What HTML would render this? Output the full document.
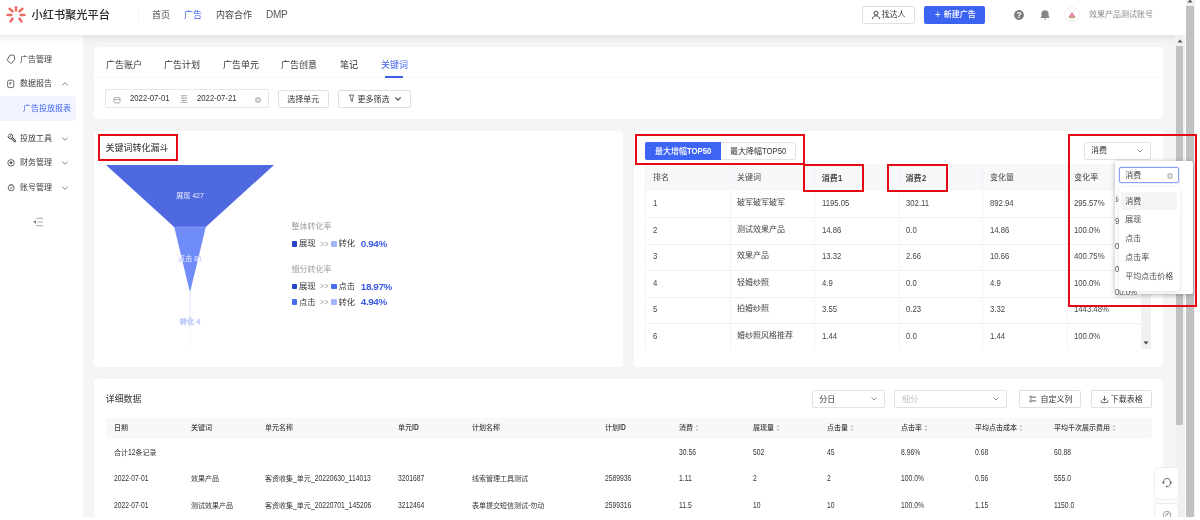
<!DOCTYPE html>
<html lang="zh-CN">
<head>
<meta charset="utf-8">
<title>小红书聚光平台</title>
<style>
*{box-sizing:border-box;margin:0;padding:0}
html,body{width:1200px;height:520px;overflow:hidden;background:#f5f5f5}
body{position:relative;font-family:"Liberation Sans","Noto Sans CJK SC",sans-serif;font-size:8px;color:#333;-webkit-font-smoothing:antialiased}
.abs{position:absolute}
.t{position:absolute;white-space:nowrap;line-height:1}
#header{left:0;top:0;width:1186px;height:35px;background:#fff;}
#side{left:0;top:35px;width:83px;height:485px;background:#fff}
.card{position:absolute;background:#fff;border-radius:4px}
.btn{position:absolute;border:1px solid #e0e0e0;border-radius:2px;background:#fff}
.blue{color:#4264ec}
.hl{position:absolute;height:1px;background:#efefef}
.n{display:inline-block;font-size:1.18em;line-height:0;transform:scaleX(.82);transform-origin:0 50%}
.s{font-size:1.1em}
</style>
</head>
<body>
<div id="root" style="position:absolute;left:0;top:0;width:1200px;height:520px;overflow:hidden;will-change:transform">
<!-- HEADER -->
<div id="header" class="abs"></div>
<svg class="abs" style="left:0;top:0" width="32" height="32" viewBox="0 0 32 32">
 <g stroke="#ef6f68" stroke-width="2.500" stroke-linecap="round">
  <line x1="16" y1="7.200" x2="16" y2="10.400"/>
  <line x1="9.500" y1="8.800" x2="12.500" y2="11.300"/>
  <line x1="22.500" y1="8.800" x2="19.500" y2="11.300"/>
  <line x1="7.500" y1="15" x2="11.400" y2="15"/>
  <line x1="24.500" y1="15" x2="20.600" y2="15"/>
  <line x1="10.500" y1="21.500" x2="12.500" y2="18.500"/>
  <line x1="21.500" y1="21.500" x2="19.500" y2="18.500"/>
 </g>
</svg>
<div class="t" style="left:31.500px;top:9.500px;font-size:11.200px;color:#2a2a2a;font-weight:500">小红书聚光平台</div>
<div class="abs" style="left:138px;top:9px;width:1px;height:12px;background:#f4f4f4"></div>
<div class="t" style="left:152px;top:11px;font-size:9px;color:#444">首页</div>
<div class="t blue" style="left:184px;top:11px;font-size:9px">广告</div>
<div class="t" style="left:216px;top:11px;font-size:9px;color:#444">内容合作</div>
<div class="t w" style="left:266px;top:10.300px;font-size:10px;color:#555;letter-spacing:-.3px">DMP</div>

<div class="btn" style="left:862px;top:6px;width:53px;height:18px"></div>
<svg class="abs" style="left:871px;top:10px" width="10" height="10" viewBox="0 0 10 10"><circle cx="5" cy="3.2" r="2" fill="none" stroke="#444" stroke-width="1"/><path d="M1.4 9c.3-2.2 1.8-3.2 3.6-3.2S8.300 6.800 8.600 9" fill="none" stroke="#444" stroke-width="1"/></svg>
<div class="t" style="left:881.500px;top:11px;font-size:8px;color:#333">找达人</div>
<div class="abs" style="left:924px;top:6px;width:61px;height:18px;background:#3d63f2;border-radius:2px"></div>
<div class="t" style="left:934.500px;top:9.300px;font-size:10px;color:#fff"><span class="s">&#8203;</span><span class="n" style="margin-right:-1.24px">+</span></div>
<div class="t" style="left:943.800px;top:11px;font-size:8px;color:#fff;font-weight:500">新建广告</div>
<svg class="abs" style="left:1012.700px;top:8.700px" width="12" height="12" viewBox="0 0 12 12"><circle cx="6" cy="6" r="4.900" fill="#7c7c7c"/><text x="6" y="9.100" font-size="8.500" font-weight="700" text-anchor="middle" fill="#fff" font-family="Liberation Sans, sans-serif">?</text></svg>
<svg class="abs" style="left:1039.200px;top:9px" width="12" height="12" viewBox="0 0 12 12"><path d="M6 1.300c-2.300 0-3.600 1.500-3.600 3.500v2.500L1.300 8.900h9.400L9.600 7.300V4.800C9.600 2.800 8.300 1.300 6 1.300z" fill="#858585"/><rect x="4.900" y="9.500" width="2.200" height="1.100" rx=".55" fill="#858585"/></svg>
<div class="abs" style="left:1064.200px;top:7.100px;width:15.400px;height:15.400px;border-radius:50%;border:1px solid #f9edf0;background:#fff"></div>
<svg class="abs" style="left:1067.800px;top:11px" width="8" height="8" viewBox="0 0 8 8"><path d="M4 .7L7.500 6.100Q4 7.900.5 6.100z" fill="#ec8a97"/><path d="M.7 6.200Q4 8 7.300 6.200" fill="none" stroke="#8fae7c" stroke-width=".8"/></svg>
<div class="t" style="left:1089px;top:11px;font-size:8px;color:#888">效果产品测试账号</div>

<!-- SIDEBAR -->
<div id="side" class="abs"></div>
<div class="abs" style="left:0;top:35px;width:1175px;height:9px;background:linear-gradient(to bottom,rgba(0,0,0,.07),rgba(0,0,0,.035) 35%,rgba(0,0,0,0))"></div>
<div class="abs" style="left:0;top:96px;width:76px;height:24.500px;background:#f2f5ff;border-radius:0 4px 4px 0"></div>
<svg class="abs" style="left:6px;top:54px" width="10" height="10" viewBox="0 0 10 10"><path d="M4.300 1.300h3a1.400 1.400 0 0 1 1.400 1.400v3L5.200 9.100a.8.800 0 0 1-1.100 0L1.200 6.200a.8.800 0 0 1 0-1.100z" fill="none" stroke="#555" stroke-width=".85" stroke-linejoin="round" transform="rotate(-8 5 5)"/></svg>
<div class="t" style="left:20px;top:55.600px;font-size:8px;color:#3c3c3c">广告管理</div>
<svg class="abs" style="left:6px;top:78.500px" width="10" height="10" viewBox="0 0 10 10"><rect x="1.600" y="1.200" width="6.200" height="7.400" rx="1.600" fill="none" stroke="#555" stroke-width=".85"/><path d="M3.800 5.800V3.500h1.900M3.800 4.600h1.400" stroke="#555" stroke-width=".7" fill="none"/></svg>
<div class="t" style="left:20px;top:80.300px;font-size:8px;color:#3c3c3c">数据报告</div>
<svg class="abs" style="left:61px;top:80.500px" width="8" height="6" viewBox="0 0 8 6"><path d="M1.300 4.400L4 1.700l2.700 2.700" fill="none" stroke="#777" stroke-width=".9"/></svg>
<div class="t blue" style="left:23px;top:105.300px;font-size:8px">广告投放报表</div>
<svg class="abs" style="left:6.500px;top:133px" width="10" height="10" viewBox="0 0 10 10"><path d="M4.600 4.800L8 8.200" stroke="#444" stroke-width="2.500" stroke-linecap="round"/><path d="M4.600 4.800L8 8.200" stroke="#fff" stroke-width=".9" stroke-linecap="round"/><circle cx="3.400" cy="3.400" r="2.300" fill="#fff" stroke="#444" stroke-width=".95"/><path d="M1.600 1.700L3.300 3.400" stroke="#fff" stroke-width="1.300"/><path d="M3.600 2.200v1.500H2.200" fill="none" stroke="#444" stroke-width=".7"/></svg>
<div class="t" style="left:20px;top:134.700px;font-size:8px;color:#3c3c3c">投放工具</div>
<svg class="abs" style="left:61px;top:135.500px" width="8" height="6" viewBox="0 0 8 6"><path d="M1.300 1.600L4 4.300l2.700-2.700" fill="none" stroke="#777" stroke-width=".9"/></svg>
<svg class="abs" style="left:6px;top:158px" width="10" height="10" viewBox="0 0 10 10"><circle cx="5" cy="4.800" r="3.200" fill="none" stroke="#444" stroke-width=".85"/><circle cx="5" cy="4.800" r="1.300" fill="#444"/></svg>
<div class="t" style="left:20px;top:159px;font-size:8px;color:#3c3c3c">财务管理</div>
<svg class="abs" style="left:61px;top:160px" width="8" height="6" viewBox="0 0 8 6"><path d="M1.300 1.600L4 4.300l2.700-2.700" fill="none" stroke="#777" stroke-width=".9"/></svg>
<svg class="abs" style="left:6px;top:183px" width="10" height="10" viewBox="0 0 10 10"><circle cx="5.200" cy="4.900" r="3" fill="none" stroke="#555" stroke-width=".85"/><path d="M3.800 5l1.100 1 1.800-2.300" fill="none" stroke="#555" stroke-width=".8"/><path d="M3.500 1.600l3.400 0" stroke="#555" stroke-width=".6"/></svg>
<div class="t" style="left:20px;top:183.700px;font-size:8px;color:#3c3c3c">账号管理</div>
<svg class="abs" style="left:61px;top:185px" width="8" height="6" viewBox="0 0 8 6"><path d="M1.300 1.600L4 4.300l2.700-2.700" fill="none" stroke="#777" stroke-width=".9"/></svg>
<svg class="abs" style="left:32px;top:216px" width="12" height="12" viewBox="0 0 12 12"><path d="M4.200 2.300h6.800M5.500 6h5.500M4.200 9.700h6.800" fill="none" stroke="#999" stroke-width=".85"/><path d="M4 4.200v3.600L1.200 6z" fill="#777"/></svg>

<!-- TOP CARD (tabs + filters) -->
<div class="card" style="left:94px;top:46.500px;width:1069px;height:72px"></div>
<div class="hl" style="left:94px;top:77px;width:1069px;background:#f8f8f8"></div>
<div class="t" style="left:106px;top:60.5px;font-size:9px;color:#333">广告账户</div>
<div class="t" style="left:164px;top:60.5px;font-size:9px;color:#333">广告计划</div>
<div class="t" style="left:223px;top:60.5px;font-size:9px;color:#333">广告单元</div>
<div class="t" style="left:281px;top:60.5px;font-size:9px;color:#333">广告创意</div>
<div class="t" style="left:340px;top:60.5px;font-size:9px;color:#333">笔记</div>
<div class="t blue" style="left:381px;top:60.5px;font-size:9px">关键词</div>
<div class="abs" style="left:385px;top:76px;width:18px;height:2px;background:#3d5fe6"></div>

<div class="btn" style="left:105.400px;top:89.400px;width:163.900px;height:18.500px;border-color:#e6e6e6"></div>
<svg class="abs" style="left:113px;top:95.8px" width="8" height="8" viewBox="0 0 8 8"><rect x="1" y="1.500" width="6" height="5.500" rx="1" fill="none" stroke="#999" stroke-width=".8"/><path d="M1 3.500h6" stroke="#999" stroke-width=".8"/></svg>
<div class="t" style="left:130px;top:94.100px;font-size:8px;color:#333"><span class="s">&#8203;</span><span class="n" style="margin-right:-8.69px">2022-07-01</span></div>
<div class="t" style="left:180px;top:96.300px;font-size:8px;color:#888">至</div>
<div class="t" style="left:197px;top:94.100px;font-size:8px;color:#333"><span class="s">&#8203;</span><span class="n" style="margin-right:-8.69px">2022-07-21</span></div>
<svg class="abs" style="left:254px;top:95.8px" width="8" height="8" viewBox="0 0 8 8"><circle cx="4" cy="4" r="3" fill="#c4c4c4"/><path d="M2.900 2.900l2.200 2.200M5.100 2.900L2.900 5.100" stroke="#fff" stroke-width=".7"/></svg>
<div class="btn" style="left:278.300px;top:89.600px;width:50.400px;height:18.300px"></div>
<div class="t" style="left:287.200px;top:96.100px;font-size:8px;color:#333">选择单元</div>
<div class="btn" style="left:338.200px;top:89.600px;width:72.600px;height:18.300px"></div>
<svg class="abs" style="left:347.500px;top:94.400px" width="8" height="9" viewBox="0 0 8 9"><path d="M1.400 1.100h4.600L4.400 4.300v3.200L3 6.600V4.300z" fill="none" stroke="#444" stroke-width=".8" stroke-linejoin="round"/></svg>
<div class="t" style="left:357.400px;top:96.100px;font-size:8px;color:#333">更多筛选</div>
<svg class="abs" style="left:393.800px;top:96.400px" width="8" height="6" viewBox="0 0 8 6"><path d="M1.300 1.400L4 4.100l2.700-2.700" fill="none" stroke="#444" stroke-width="1.100"/></svg>

<!-- FUNNEL CARD -->
<div class="card" style="left:94px;top:130.500px;width:529px;height:236px"></div>
<div class="t" style="left:105.500px;top:143.800px;font-size:9px;color:#2a2a2a">关键词转化漏斗</div>
<svg class="abs" style="left:100px;top:160px" width="190" height="195" viewBox="0 0 190 195">
 <path d="M6 5h168L105.800 67h-31.600z" fill="#4f69e0"/>
 <path d="M74.200 67h31.600L90 132.500z" fill="#708cf9"/>
 <rect x="74.200" y="66.700" width="31.600" height=".8" fill="#8aa0f6"/>
 <rect x="89.500" y="130" width="1" height="38" fill="#e3e9fd"/>
 <rect x="89.600" y="168" width=".8" height="18" fill="#f0f3fe"/>
 <text x="90" y="37.500" font-size="7" fill="#e8ecff" text-anchor="middle" font-family="Liberation Sans, Noto Sans CJK SC, sans-serif">展现 427</text>
 <text x="90" y="101" font-size="7.300" fill="#cdd7ff" stroke="#cdd7ff" stroke-width=".25" text-anchor="middle" font-family="Liberation Sans, Noto Sans CJK SC, sans-serif">点击 81</text>
 <text x="90" y="164" font-size="7.300" fill="#b9c7fd" stroke="#b9c7fd" stroke-width=".35" text-anchor="middle" font-family="Liberation Sans, Noto Sans CJK SC, sans-serif">转化 4</text>
</svg>
<div class="t" style="left:291.500px;top:222.900px;font-size:8px;color:#a0a0a0">整体转化率</div>
<div class="abs" style="left:291.500px;top:241.0px;width:5.600px;height:5.600px;background:#2544c8;border-radius:1px"></div>
<div class="t" style="left:299px;top:239.4px;font-size:8.300px;color:#333">展现</div>
<div class="t" style="left:319.500px;top:240.7px;font-size:7.500px;color:#aaa"><span class="s">&#8203;</span><span class="n" style="margin-right:-1.86px">&gt;&gt;</span></div>
<div class="abs" style="left:331px;top:241.0px;width:5.600px;height:5.600px;background:#a3b5fb;border-radius:1px"></div>
<div class="t" style="left:338.500px;top:239.4px;font-size:8.300px;color:#333">转化</div>
<div class="t w" style="left:360.800px;top:238.8px;font-size:9.900px;color:#3d5be6;font-weight:700;letter-spacing:-.4px">0.94%</div>
<div class="t" style="left:291.500px;top:265.800px;font-size:8px;color:#a0a0a0">细分转化率</div>
<div class="abs" style="left:291.500px;top:283.7px;width:5.600px;height:5.600px;background:#2544c8;border-radius:1px"></div>
<div class="t" style="left:299px;top:282.1px;font-size:8.300px;color:#333">展现</div>
<div class="t" style="left:319.500px;top:283.4px;font-size:7.500px;color:#aaa"><span class="s">&#8203;</span><span class="n" style="margin-right:-1.86px">&gt;&gt;</span></div>
<div class="abs" style="left:331px;top:283.7px;width:5.600px;height:5.600px;background:#4a6cf0;border-radius:1px"></div>
<div class="t" style="left:338.500px;top:282.1px;font-size:8.300px;color:#333">点击</div>
<div class="t w" style="left:360.800px;top:281.5px;font-size:9.900px;color:#3d5be6;font-weight:700;letter-spacing:-.4px">18.97%</div>
<div class="abs" style="left:291.500px;top:299.1px;width:5.600px;height:5.600px;background:#4a6cf0;border-radius:1px"></div>
<div class="t" style="left:299px;top:297.5px;font-size:8.300px;color:#333">点击</div>
<div class="t" style="left:319.500px;top:298.8px;font-size:7.500px;color:#aaa"><span class="s">&#8203;</span><span class="n" style="margin-right:-1.86px">&gt;&gt;</span></div>
<div class="abs" style="left:331px;top:299.1px;width:5.600px;height:5.600px;background:#a3b5fb;border-radius:1px"></div>
<div class="t" style="left:338.500px;top:297.5px;font-size:8.300px;color:#333">转化</div>
<div class="t w" style="left:360.800px;top:296.9px;font-size:9.900px;color:#3d5be6;font-weight:700;letter-spacing:-.4px">4.94%</div>
<div class="abs" style="left:97.800px;top:134px;width:80.100px;height:27.400px;border:2.400px solid #e60a14"></div>

<!-- TOP50 CARD -->
<div class="card" style="left:634px;top:130.500px;width:529px;height:236px"></div>
<!--TOP50-->
<div class="abs" style="left:645px;top:141.5px;width:151.3px;height:18.3px;border:1px solid #e3e3e3;border-radius:2px;background:#fff"></div>
<div class="abs" style="left:645px;top:141.5px;width:76px;height:18.3px;background:#3d64f4;border-radius:2px 0 0 2px"></div>
<div class="t" style="left:655px;top:146.5px;font-size:8px;color:#fff;font-weight:500"><span class="s">&#8203;</span>最大增幅<span class="n" style="margin-right:-5.35px;font-weight:700">TOP50</span></div>
<div class="t" style="left:730px;top:146.5px;font-size:8px;color:#333;"><span class="s">&#8203;</span>最大降幅<span class="n" style="margin-right:-5.35px">TOP50</span></div>
<div class="btn" style="left:1084px;top:141.6px;width:67.4px;height:18.2px;border-color:#e2e2e2"></div>
<div class="t" style="left:1091px;top:147.3px;font-size:8px;color:#333;">消费</div>
<svg class="abs" style="left:1136px;top:148px" width="8" height="6" viewBox="0 0 8 6"><path d="M1.500 1.500L4 4l2.500-2.500" fill="none" stroke="#888" stroke-width=".9"/></svg>
<div class="abs" style="left:645px;top:164.2px;width:496px;height:26.4px;background:#f7f8fa"></div>
<div class="t" style="left:653px;top:174px;font-size:8px;color:#444;">排名</div>
<div class="t" style="left:737px;top:174px;font-size:8px;color:#444;">关键词</div>
<div class="t" style="left:821.8px;top:174px;font-size:8px;color:#444;font-weight:700;"><span class="s">&#8203;</span>消费<span class="n" style="margin-right:-0.95px">1</span></div>
<div class="t" style="left:905.5px;top:174px;font-size:8px;color:#444;font-weight:700;"><span class="s">&#8203;</span>消费<span class="n" style="margin-right:-0.95px">2</span></div>
<div class="t" style="left:990px;top:174px;font-size:8px;color:#444;">变化量</div>
<div class="t" style="left:1074.2px;top:174px;font-size:8px;color:#444;">变化率</div>
<div class="t" style="left:653px;top:199.2px;font-size:8px;color:#444;"><span class="s">&#8203;</span><span class="n" style="margin-right:-0.95px">1</span></div>
<div class="t" style="left:737px;top:199.2px;font-size:8px;color:#444;">破军破军破军</div>
<div class="t" style="left:821.8px;top:199.2px;font-size:8px;color:#444;"><span class="s">&#8203;</span><span class="n" style="margin-right:-6.02px">1195.05</span></div>
<div class="t" style="left:905.5px;top:199.2px;font-size:8px;color:#444;"><span class="s">&#8203;</span><span class="n" style="margin-right:-5.07px">302.11</span></div>
<div class="t" style="left:990px;top:199.2px;font-size:8px;color:#444;"><span class="s">&#8203;</span><span class="n" style="margin-right:-5.20px">892.94</span></div>
<div class="t" style="left:1074.2px;top:199.2px;font-size:8px;color:#444;"><span class="s">&#8203;</span><span class="n" style="margin-right:-6.71px">295.57%</span></div>
<div class="hl" style="left:645px;top:217.2px;width:496px;background:#edeff5"></div>
<div class="t" style="left:653px;top:225.8px;font-size:8px;color:#444;"><span class="s">&#8203;</span><span class="n" style="margin-right:-0.95px">2</span></div>
<div class="t" style="left:737px;top:225.8px;font-size:8px;color:#444;">测试效果产品</div>
<div class="t" style="left:821.8px;top:225.8px;font-size:8px;color:#444;"><span class="s">&#8203;</span><span class="n" style="margin-right:-4.25px">14.86</span></div>
<div class="t" style="left:905.5px;top:225.8px;font-size:8px;color:#444;"><span class="s">&#8203;</span><span class="n" style="margin-right:-2.36px">0.0</span></div>
<div class="t" style="left:990px;top:225.8px;font-size:8px;color:#444;"><span class="s">&#8203;</span><span class="n" style="margin-right:-4.25px">14.86</span></div>
<div class="t" style="left:1074.2px;top:225.8px;font-size:8px;color:#444;"><span class="s">&#8203;</span><span class="n" style="margin-right:-5.76px">100.0%</span></div>
<div class="hl" style="left:645px;top:243.7px;width:496px;background:#edeff5"></div>
<div class="t" style="left:653px;top:252.2px;font-size:8px;color:#444;"><span class="s">&#8203;</span><span class="n" style="margin-right:-0.95px">3</span></div>
<div class="t" style="left:737px;top:252.2px;font-size:8px;color:#444;">效果产品</div>
<div class="t" style="left:821.8px;top:252.2px;font-size:8px;color:#444;"><span class="s">&#8203;</span><span class="n" style="margin-right:-4.25px">13.32</span></div>
<div class="t" style="left:905.5px;top:252.2px;font-size:8px;color:#444;"><span class="s">&#8203;</span><span class="n" style="margin-right:-3.31px">2.66</span></div>
<div class="t" style="left:990px;top:252.2px;font-size:8px;color:#444;"><span class="s">&#8203;</span><span class="n" style="margin-right:-4.25px">10.66</span></div>
<div class="t" style="left:1074.2px;top:252.2px;font-size:8px;color:#444;"><span class="s">&#8203;</span><span class="n" style="margin-right:-6.71px">400.75%</span></div>
<div class="hl" style="left:645px;top:270.2px;width:496px;background:#edeff5"></div>
<div class="t" style="left:653px;top:278.8px;font-size:8px;color:#444;"><span class="s">&#8203;</span><span class="n" style="margin-right:-0.95px">4</span></div>
<div class="t" style="left:737px;top:278.8px;font-size:8px;color:#444;">轻婚纱照</div>
<div class="t" style="left:821.8px;top:278.8px;font-size:8px;color:#444;"><span class="s">&#8203;</span><span class="n" style="margin-right:-2.36px">4.9</span></div>
<div class="t" style="left:905.5px;top:278.8px;font-size:8px;color:#444;"><span class="s">&#8203;</span><span class="n" style="margin-right:-2.36px">0.0</span></div>
<div class="t" style="left:990px;top:278.8px;font-size:8px;color:#444;"><span class="s">&#8203;</span><span class="n" style="margin-right:-2.36px">4.9</span></div>
<div class="t" style="left:1074.2px;top:278.8px;font-size:8px;color:#444;"><span class="s">&#8203;</span><span class="n" style="margin-right:-5.76px">100.0%</span></div>
<div class="hl" style="left:645px;top:296.7px;width:496px;background:#edeff5"></div>
<div class="t" style="left:653px;top:305.2px;font-size:8px;color:#444;"><span class="s">&#8203;</span><span class="n" style="margin-right:-0.95px">5</span></div>
<div class="t" style="left:737px;top:305.2px;font-size:8px;color:#444;">拍婚纱照</div>
<div class="t" style="left:821.8px;top:305.2px;font-size:8px;color:#444;"><span class="s">&#8203;</span><span class="n" style="margin-right:-3.31px">3.55</span></div>
<div class="t" style="left:905.5px;top:305.2px;font-size:8px;color:#444;"><span class="s">&#8203;</span><span class="n" style="margin-right:-3.31px">0.23</span></div>
<div class="t" style="left:990px;top:305.2px;font-size:8px;color:#444;"><span class="s">&#8203;</span><span class="n" style="margin-right:-3.31px">3.32</span></div>
<div class="t" style="left:1074.2px;top:305.2px;font-size:8px;color:#444;"><span class="s">&#8203;</span><span class="n" style="margin-right:-7.65px">1443.48%</span></div>
<div class="hl" style="left:645px;top:323.2px;width:496px;background:#edeff5"></div>
<div class="t" style="left:653px;top:331.8px;font-size:8px;color:#444;"><span class="s">&#8203;</span><span class="n" style="margin-right:-0.95px">6</span></div>
<div class="t" style="left:737px;top:331.8px;font-size:8px;color:#444;">婚纱照风格推荐</div>
<div class="t" style="left:821.8px;top:331.8px;font-size:8px;color:#444;"><span class="s">&#8203;</span><span class="n" style="margin-right:-3.31px">1.44</span></div>
<div class="t" style="left:905.5px;top:331.8px;font-size:8px;color:#444;"><span class="s">&#8203;</span><span class="n" style="margin-right:-2.36px">0.0</span></div>
<div class="t" style="left:990px;top:331.8px;font-size:8px;color:#444;"><span class="s">&#8203;</span><span class="n" style="margin-right:-3.31px">1.44</span></div>
<div class="t" style="left:1074.2px;top:331.8px;font-size:8px;color:#444;"><span class="s">&#8203;</span><span class="n" style="margin-right:-5.76px">100.0%</span></div>
<div class="abs" style="left:730px;top:164.2px;width:1px;height:184.8px;background:#f2f3f9"></div>
<div class="abs" style="left:814px;top:164.2px;width:1px;height:184.8px;background:#f2f3f9"></div>
<div class="abs" style="left:898.5px;top:164.2px;width:1px;height:184.8px;background:#f2f3f9"></div>
<div class="abs" style="left:982.3px;top:164.2px;width:1px;height:184.8px;background:#f2f3f9"></div>
<div class="abs" style="left:1066.5px;top:164.2px;width:1px;height:184.8px;background:#f2f3f9"></div>
<div class="abs" style="left:645px;top:164.2px;width:1px;height:184.8px;background:#f2f3f9"></div>
<div class="abs" style="left:1141px;top:164.2px;width:10px;height:184.8px;background:#f1f1f1"></div>
<svg class="abs" style="left:1143px;top:341px" width="6" height="4" viewBox="0 0 6 4"><path d="M.5.5h5L3 3.500z" fill="#444"/></svg>
<div class="abs" style="left:640px;top:349px;width:520px;height:17px;background:#fff"></div>
<div class="abs" style="left:635.3px;top:133.7px;width:169.7px;height:31.8px;border:2.3px solid #e60a14"></div>
<div class="abs" style="left:803.2px;top:164.3px;width:60.8px;height:27.4px;border:2.3px solid #e60a14"></div>
<div class="abs" style="left:886.9px;top:164.3px;width:60.7px;height:27.4px;border:2.3px solid #e60a14"></div>
<!--/TOP50-->

<!-- DETAIL CARD -->
<div class="card" style="left:94px;top:378.600px;width:1069px;height:150px"></div>
<!--DETAIL-->
<div class="t" style="left:105.8px;top:395.3px;font-size:8.9px;color:#333;">详细数据</div>
<div class="btn" style="left:812.3px;top:389.5px;width:73px;height:18.2px;border-color:#e2e2e2"></div>
<div class="t" style="left:819.3px;top:395.6px;font-size:8px;color:#333;">分日</div>
<svg class="abs" style="left:870px;top:396px" width="8" height="6" viewBox="0 0 8 6"><path d="M1.500 1.500L4 4l2.500-2.500" fill="none" stroke="#888" stroke-width=".9"/></svg>
<div class="btn" style="left:894px;top:389.5px;width:112.6px;height:18.2px;border-color:#e2e2e2"></div>
<div class="t" style="left:902px;top:395.6px;font-size:8px;color:#c2c2c2;">细分</div>
<svg class="abs" style="left:992px;top:396px" width="8" height="6" viewBox="0 0 8 6"><path d="M1.500 1.500L4 4l2.500-2.500" fill="none" stroke="#888" stroke-width=".9"/></svg>
<div class="btn" style="left:1019.4px;top:389.5px;width:62px;height:18.2px"></div>
<svg class="abs" style="left:1029.3px;top:395.2px" width="8" height="8" viewBox="0 0 8 8"><path d="M3.400 2.100h3.800M3.400 5.900h3.800" stroke="#555" stroke-width=".9"/><circle cx="1.900" cy="2.100" r="1.150" fill="#fff" stroke="#555" stroke-width=".75"/><circle cx="1.900" cy="5.900" r="1.150" fill="#fff" stroke="#555" stroke-width=".75"/></svg>
<div class="t" style="left:1040.5px;top:395.6px;font-size:8px;color:#333;">自定义列</div>
<div class="btn" style="left:1090.6px;top:389.5px;width:61.2px;height:18.2px"></div>
<svg class="abs" style="left:1100.2px;top:395px" width="9" height="9" viewBox="0 0 9 9"><path d="M4.500 1v4.300M2.700 3.700l1.800 1.800 1.800-1.800" fill="none" stroke="#444" stroke-width=".85"/><path d="M1.200 5.300v1.300a1 1 0 0 0 1 1h4.600a1 1 0 0 0 1-1V5.300" fill="none" stroke="#444" stroke-width=".85"/></svg>
<div class="t" style="left:1110.8px;top:395.6px;font-size:8px;color:#333;">下载表格</div>
<div class="abs" style="left:105.7px;top:417.6px;width:1046px;height:21.2px;background:#f7f8fa;border-radius:3px"></div>
<div class="t" style="left:114px;top:424.2px;font-size:7px;color:#444;font-weight:500">日期</div>
<div class="t" style="left:191px;top:424.2px;font-size:7px;color:#444;font-weight:500">关键词</div>
<div class="t" style="left:265px;top:424.2px;font-size:7px;color:#444;font-weight:500">单元名称</div>
<div class="t" style="left:398px;top:424.2px;font-size:7px;color:#444;font-weight:500"><span class="s">&#8203;</span>单元<span class="n" style="margin-right:-1.49px;font-weight:700">ID</span></div>
<div class="t" style="left:472px;top:424.2px;font-size:7px;color:#444;font-weight:500">计划名称</div>
<div class="t" style="left:605px;top:424.2px;font-size:7px;color:#444;font-weight:500"><span class="s">&#8203;</span>计划<span class="n" style="margin-right:-1.49px;font-weight:700">ID</span></div>
<div class="t" style="left:679px;top:424.2px;font-size:7px;color:#444;font-weight:500">消费</div>
<svg class="abs" style="left:694.5px;top:423.8px" width="4" height="8" viewBox="0 0 4 8"><path d="M2 .8L3.500 3H.5z" fill="#c2c2c2"/><path d="M2 7.200L3.500 5H.5z" fill="#c2c2c2"/></svg>
<div class="t" style="left:753px;top:424.2px;font-size:7px;color:#444;font-weight:500">展现量</div>
<svg class="abs" style="left:775.5px;top:423.8px" width="4" height="8" viewBox="0 0 4 8"><path d="M2 .8L3.500 3H.5z" fill="#c2c2c2"/><path d="M2 7.200L3.500 5H.5z" fill="#c2c2c2"/></svg>
<div class="t" style="left:827px;top:424.2px;font-size:7px;color:#444;font-weight:500">点击量</div>
<svg class="abs" style="left:849.5px;top:423.8px" width="4" height="8" viewBox="0 0 4 8"><path d="M2 .8L3.500 3H.5z" fill="#c2c2c2"/><path d="M2 7.200L3.500 5H.5z" fill="#c2c2c2"/></svg>
<div class="t" style="left:901px;top:424.2px;font-size:7px;color:#444;font-weight:500">点击率</div>
<svg class="abs" style="left:923.5px;top:423.8px" width="4" height="8" viewBox="0 0 4 8"><path d="M2 .8L3.500 3H.5z" fill="#c2c2c2"/><path d="M2 7.200L3.500 5H.5z" fill="#c2c2c2"/></svg>
<div class="t" style="left:975px;top:424.2px;font-size:7px;color:#444;font-weight:500">平均点击成本</div>
<svg class="abs" style="left:1018.5px;top:423.8px" width="4" height="8" viewBox="0 0 4 8"><path d="M2 .8L3.500 3H.5z" fill="#c2c2c2"/><path d="M2 7.200L3.500 5H.5z" fill="#c2c2c2"/></svg>
<div class="t" style="left:1054px;top:424.2px;font-size:7px;color:#444;font-weight:500">平均千次展示费用</div>
<svg class="abs" style="left:1111.5px;top:423.8px" width="4" height="8" viewBox="0 0 4 8"><path d="M2 .8L3.500 3H.5z" fill="#c2c2c2"/><path d="M2 7.200L3.500 5H.5z" fill="#c2c2c2"/></svg>
<div class="t" style="left:114px;top:448.5px;font-size:7px;color:#333;"><span class="s">&#8203;</span>合计<span class="n" style="margin-right:-1.65px">12</span>条记录</div>
<div class="t" style="left:679px;top:448.5px;font-size:7px;color:#333;"><span class="s">&#8203;</span><span class="n" style="margin-right:-3.72px">30.56</span></div>
<div class="t" style="left:753px;top:448.5px;font-size:7px;color:#333;"><span class="s">&#8203;</span><span class="n" style="margin-right:-2.48px">502</span></div>
<div class="t" style="left:827px;top:448.5px;font-size:7px;color:#333;"><span class="s">&#8203;</span><span class="n" style="margin-right:-1.65px">45</span></div>
<div class="t" style="left:901px;top:448.5px;font-size:7px;color:#333;"><span class="s">&#8203;</span><span class="n" style="margin-right:-4.22px">8.96%</span></div>
<div class="t" style="left:975px;top:448.5px;font-size:7px;color:#333;"><span class="s">&#8203;</span><span class="n" style="margin-right:-2.89px">0.68</span></div>
<div class="t" style="left:1054px;top:448.5px;font-size:7px;color:#333;"><span class="s">&#8203;</span><span class="n" style="margin-right:-3.72px">60.88</span></div>
<div class="t" style="left:114px;top:474.8px;font-size:7px;color:#333;"><span class="s">&#8203;</span><span class="n" style="margin-right:-7.61px">2022-07-01</span></div>
<div class="t" style="left:191px;top:474.8px;font-size:7px;color:#333;">效果产品</div>
<div class="t" style="left:265px;top:474.8px;font-size:7px;color:#333;"><span class="s">&#8203;</span>客资收集<span class="n" style="margin-right:-0.83px">_</span>单元<span class="n" style="margin-right:-13.12px">_20220630_114013</span></div>
<div class="t" style="left:398px;top:474.8px;font-size:7px;color:#333;"><span class="s">&#8203;</span><span class="n" style="margin-right:-5.79px">3201687</span></div>
<div class="t" style="left:472px;top:474.8px;font-size:7px;color:#333;">线索管理工具测试</div>
<div class="t" style="left:605px;top:474.8px;font-size:7px;color:#333;"><span class="s">&#8203;</span><span class="n" style="margin-right:-5.79px">2589936</span></div>
<div class="t" style="left:679px;top:474.8px;font-size:7px;color:#333;"><span class="s">&#8203;</span><span class="n" style="margin-right:-2.78px">1.11</span></div>
<div class="t" style="left:753px;top:474.8px;font-size:7px;color:#333;"><span class="s">&#8203;</span><span class="n" style="margin-right:-0.83px">2</span></div>
<div class="t" style="left:827px;top:474.8px;font-size:7px;color:#333;"><span class="s">&#8203;</span><span class="n" style="margin-right:-0.83px">2</span></div>
<div class="t" style="left:901px;top:474.8px;font-size:7px;color:#333;"><span class="s">&#8203;</span><span class="n" style="margin-right:-5.04px">100.0%</span></div>
<div class="t" style="left:975px;top:474.8px;font-size:7px;color:#333;"><span class="s">&#8203;</span><span class="n" style="margin-right:-2.89px">0.56</span></div>
<div class="t" style="left:1054px;top:474.8px;font-size:7px;color:#333;"><span class="s">&#8203;</span><span class="n" style="margin-right:-3.72px">555.0</span></div>
<div class="t" style="left:114px;top:501.5px;font-size:7px;color:#333;"><span class="s">&#8203;</span><span class="n" style="margin-right:-7.61px">2022-07-01</span></div>
<div class="t" style="left:191px;top:501.5px;font-size:7px;color:#333;">测试效果产品</div>
<div class="t" style="left:265px;top:501.5px;font-size:7px;color:#333;"><span class="s">&#8203;</span>客资收集<span class="n" style="margin-right:-0.83px">_</span>单元<span class="n" style="margin-right:-13.23px">_20220701_145206</span></div>
<div class="t" style="left:398px;top:501.5px;font-size:7px;color:#333;"><span class="s">&#8203;</span><span class="n" style="margin-right:-5.79px">3212464</span></div>
<div class="t" style="left:472px;top:501.5px;font-size:7px;color:#333;"><span class="s">&#8203;</span>表单提交短信测试<span class="n" style="margin-right:-0.50px">-</span>勿动</div>
<div class="t" style="left:605px;top:501.5px;font-size:7px;color:#333;"><span class="s">&#8203;</span><span class="n" style="margin-right:-5.79px">2599316</span></div>
<div class="t" style="left:679px;top:501.5px;font-size:7px;color:#333;"><span class="s">&#8203;</span><span class="n" style="margin-right:-2.78px">11.5</span></div>
<div class="t" style="left:753px;top:501.5px;font-size:7px;color:#333;"><span class="s">&#8203;</span><span class="n" style="margin-right:-1.65px">10</span></div>
<div class="t" style="left:827px;top:501.5px;font-size:7px;color:#333;"><span class="s">&#8203;</span><span class="n" style="margin-right:-1.65px">10</span></div>
<div class="t" style="left:901px;top:501.5px;font-size:7px;color:#333;"><span class="s">&#8203;</span><span class="n" style="margin-right:-5.04px">100.0%</span></div>
<div class="t" style="left:975px;top:501.5px;font-size:7px;color:#333;"><span class="s">&#8203;</span><span class="n" style="margin-right:-2.89px">1.15</span></div>
<div class="t" style="left:1054px;top:501.5px;font-size:7px;color:#333;"><span class="s">&#8203;</span><span class="n" style="margin-right:-4.44px">1150.0</span></div>
<!--/DETAIL-->

<!-- SCROLLBARS -->
<!--SCROLL-->
<div class="abs" style="left:1175px;top:35px;width:9.5px;height:485px;background:#f1f1f1"></div>
<div class="abs" style="left:1175.6px;top:46px;width:7.5px;height:378.7px;background:#c1c1c1"></div>
<svg class="abs" style="left:1176.5px;top:39px" width="6" height="4" viewBox="0 0 6 4"><path d="M.5 3.500h5L3 .5z" fill="#555"/></svg>
<div class="abs" style="left:1184.5px;top:0;width:1px;height:520px;background:#fff"></div>
<div class="abs" style="left:1185.5px;top:0;width:9.5px;height:520px;background:#f1f1f1"></div>
<div class="abs" style="left:1186.3px;top:5.5px;width:7.6px;height:515px;background:#c1c1c1"></div>
<svg class="abs" style="left:1187.3px;top:-1.5px" width="6" height="4" viewBox="0 0 6 4"><path d="M.5 3.500h5L3 .5z" fill="#555"/></svg>
<div class="abs" style="left:1195px;top:0;width:5px;height:520px;background:#fff"></div>
<!--/SCROLL-->
<!--OVERLAY-->
<div class="abs" style="left:1154.4px;top:499px;width:24.2px;height:6px;background:#fafafa"></div>
<div class="abs" style="left:1154.4px;top:467px;width:24.2px;height:33px;background:#fff;border:1px solid #ebebf3;border-radius:4.5px"></div>
<div class="abs" style="left:1154.4px;top:503px;width:24.2px;height:33px;background:#fff;border:1px solid #ebebf3;border-radius:4.5px"></div>
<svg class="abs" style="left:1160.5px;top:475.5px" width="12" height="13" viewBox="0 0 12 13"><path d="M2.700 6.200V5.600a3.300 3.300 0 0 1 6.600 0v.6" fill="none" stroke="#666" stroke-width=".9"/><rect x="1.500" y="5.300" width="1.700" height="2.800" rx=".8" fill="#666"/><rect x="8.800" y="5.300" width="1.700" height="2.800" rx=".8" fill="#666"/><path d="M9.400 8c-.2 1.600-1.400 2.400-3 2.500" fill="none" stroke="#666" stroke-width=".8"/><rect x="4.800" y="9.800" width="2" height="1.400" rx=".7" fill="#666"/></svg>
<svg class="abs" style="left:1162px;top:510px" width="10" height="10" viewBox="0 0 10 10"><circle cx="5" cy="5" r="3.800" fill="none" stroke="#888" stroke-width=".8"/><path d="M3.500 6l1-2.500L7 3z" fill="none" stroke="#888" stroke-width=".7"/></svg>
<div class="abs" style="left:1114.5px;top:160.5px;width:78px;height:133.5px;background:#fff;border-radius:2px;box-shadow:0 1px 5px rgba(0,0,0,.3)"></div>
<div class="abs" style="left:1115.3px;top:195.5px;width:4px;height:9px;overflow:hidden"><div class="t" style="left:0;top:0px;font-size:8px;color:#555">环</div></div>
<div class="abs" style="left:1115.3px;top:217px;width:4px;height:9px;overflow:hidden"><div class="t" style="left:0;top:0px;font-size:8px;color:#555"><span class="s">&#8203;</span><span class="n" style="margin-right:-0.95px">9</span></div></div>
<div class="abs" style="left:1115.3px;top:241.5px;width:4px;height:9px;overflow:hidden"><div class="t" style="left:0;top:0px;font-size:8px;color:#555"><span class="s">&#8203;</span><span class="n" style="margin-right:-0.95px">0</span></div></div>
<div class="abs" style="left:1115.3px;top:264.5px;width:4px;height:9px;overflow:hidden"><div class="t" style="left:0;top:0px;font-size:8px;color:#555"><span class="s">&#8203;</span><span class="n" style="margin-right:-0.95px">0</span></div></div>
<div class="abs" style="left:1114.6px;top:288.3px;width:22px;height:7px;overflow:hidden"><div class="t" style="left:0;top:0px;font-size:8px;color:#555"><span class="s">&#8203;</span><span class="n" style="margin-right:-4.82px">00.0%</span></div></div>
<div class="abs" style="left:1119px;top:187px;width:61px;height:104px;background:#fff;border-radius:3px;box-shadow:0 1px 4px rgba(0,0,0,.13)"></div>
<div class="abs" style="left:1119px;top:167.3px;width:60.4px;height:16px;border:1px solid #8aa2f7;border-radius:2px;background:#fff;box-shadow:0 0 0 1px rgba(61,99,242,.13)"></div>
<div class="t" style="left:1125.2px;top:171.8px;font-size:8px;color:#444;">消费</div>
<svg class="abs" style="left:1166.2px;top:171.5px" width="8" height="8" viewBox="0 0 8 8"><circle cx="4" cy="4" r="2.9" fill="#c4c4c4"/><path d="M2.900 2.900l2.200 2.200M5.100 2.900L2.900 5.100" stroke="#fff" stroke-width=".7"/></svg>
<div class="abs" style="left:1121px;top:192px;width:55.5px;height:17.8px;background:#f5f5f5;border-radius:2px"></div>
<div class="t" style="left:1125.2px;top:197.5px;font-size:8px;color:#4a4a4a;">消费</div>
<div class="t" style="left:1125.2px;top:216.2px;font-size:8px;color:#4a4a4a;">展现</div>
<div class="t" style="left:1125.2px;top:235.0px;font-size:8px;color:#4a4a4a;">点击</div>
<div class="t" style="left:1125.2px;top:253.8px;font-size:8px;color:#4a4a4a;">点击率</div>
<div class="t" style="left:1125.2px;top:272.5px;font-size:8px;color:#4a4a4a;">平均点击价格</div>
<div class="abs" style="left:1067.5px;top:133.7px;width:129.2px;height:173.8px;border:2.6px solid #e60a14"></div>
<div class="abs" style="left:0;top:517px;width:1200px;height:3px;background:#fff"></div>
<!--/OVERLAY-->
</div>
</body>
</html>
